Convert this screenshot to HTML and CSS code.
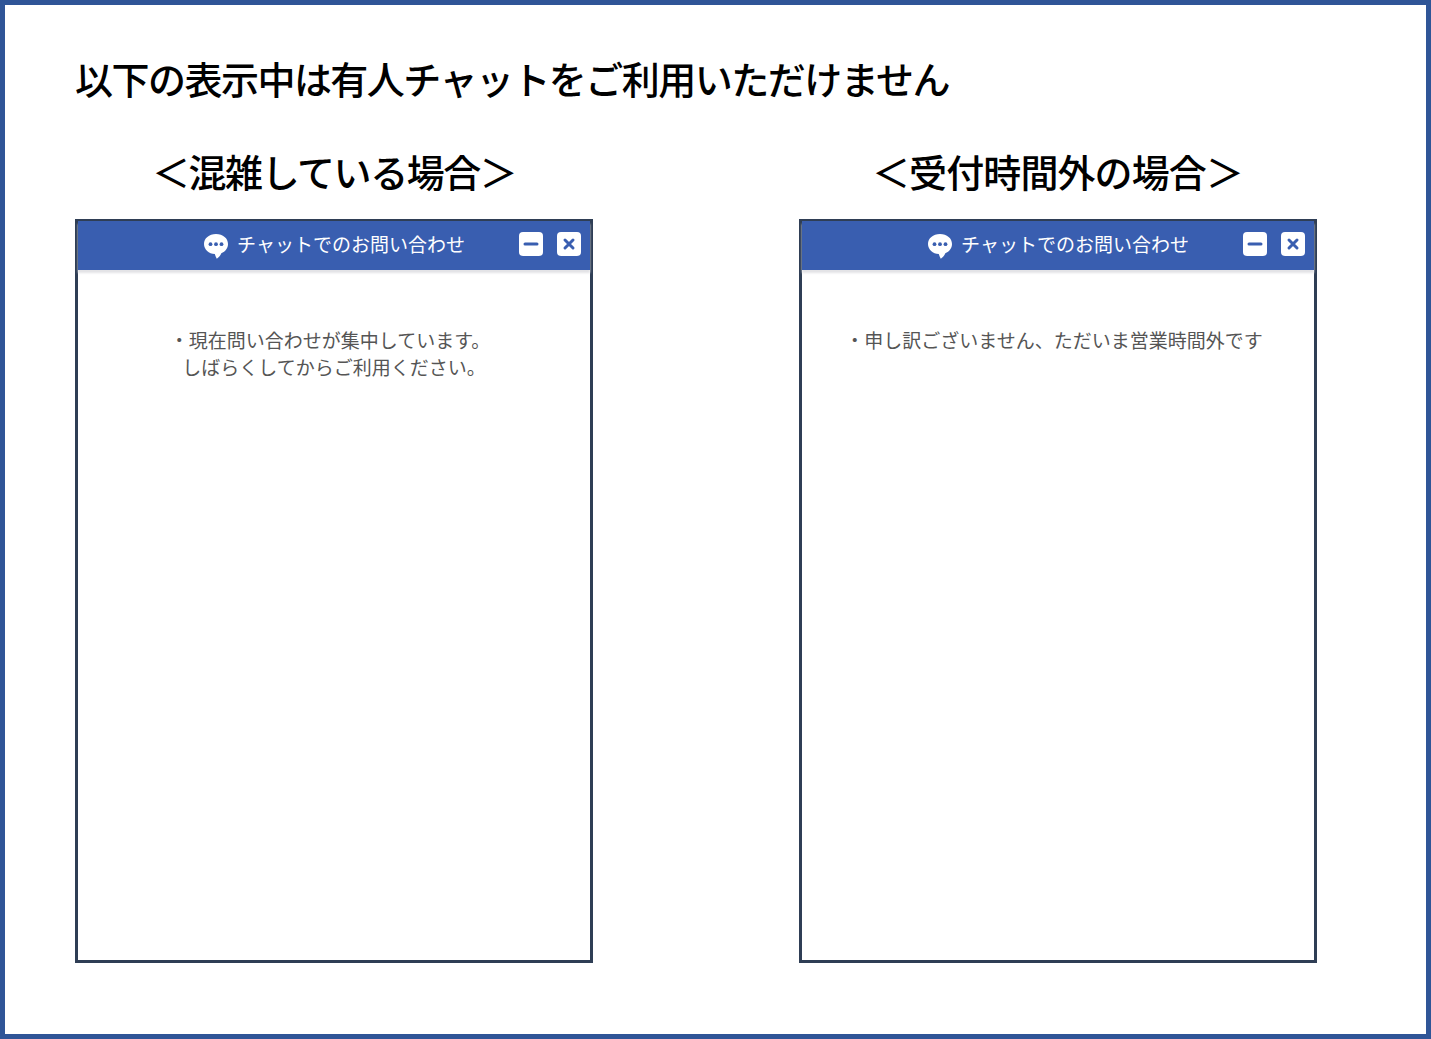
FILE: index.html
```html
<!DOCTYPE html>
<html lang="ja">
<head>
<meta charset="utf-8">
<title>チャットのご案内</title>
<link rel="stylesheet" href="styles.css">
</head>
<body>
<main class="frame">
  <h1 class="title">以下の表示中は有人チャットをご利用いただけません</h1>
  <div class="columns">
    <section class="case">
      <h2 class="case-title case-title-busy">＜混雑している場合＞</h2>
      <div class="panel">
        <header class="panel-head">
          <div class="head-label">
            <svg class="bubble" viewBox="0 0 26 27" aria-hidden="true"><path d="M13 1C6 1 1 5.400 1 11c0 5.500 4.800 9.800 10.800 10 .5 1.700 1.200 3.400 2 4.800 1.900-1.300 3.500-3 4.500-5.600C22.400 18.600 25 15.200 25 11 25 5.400 20 1 13 1z" fill="#fff"/><circle cx="7.500" cy="11.200" r="1.900" fill="#395eb0"/><circle cx="13" cy="11.200" r="1.900" fill="#395eb0"/><circle cx="18.500" cy="11.200" r="1.900" fill="#395eb0"/></svg>
            <span>チャットでのお問い合わせ</span>
          </div>
          <div class="head-buttons">
            <span class="head-btn"><svg viewBox="0 0 24 24" aria-hidden="true"><path d="M6 12h12" class="btn-stroke"/></svg></span>
            <span class="head-btn"><svg viewBox="0 0 24 24" aria-hidden="true"><path d="M8 8l8 8M16 8l-8 8" class="btn-stroke"/></svg></span>
          </div>
        </header>
        <p class="message"><span class="lead">・現在問い合わせが集中しています。</span><br>しばらくしてからご利用ください。</p>
      </div>
    </section>
    <section class="case">
      <h2 class="case-title case-title-closed">＜受付時間外の場合＞</h2>
      <div class="panel">
        <header class="panel-head">
          <div class="head-label">
            <svg class="bubble" viewBox="0 0 26 27" aria-hidden="true"><path d="M13 1C6 1 1 5.400 1 11c0 5.500 4.800 9.800 10.800 10 .5 1.700 1.200 3.400 2 4.800 1.900-1.300 3.500-3 4.500-5.600C22.400 18.600 25 15.200 25 11 25 5.400 20 1 13 1z" fill="#fff"/><circle cx="7.500" cy="11.200" r="1.900" fill="#395eb0"/><circle cx="13" cy="11.200" r="1.900" fill="#395eb0"/><circle cx="18.500" cy="11.200" r="1.900" fill="#395eb0"/></svg>
            <span>チャットでのお問い合わせ</span>
          </div>
          <div class="head-buttons">
            <span class="head-btn"><svg viewBox="0 0 24 24" aria-hidden="true"><path d="M6 12h12" class="btn-stroke"/></svg></span>
            <span class="head-btn"><svg viewBox="0 0 24 24" aria-hidden="true"><path d="M8 8l8 8M16 8l-8 8" class="btn-stroke"/></svg></span>
          </div>
        </header>
        <p class="message"><span class="lead">・申し訳ございません、ただいま営業時間外です</span></p>
      </div>
    </section>
  </div>
</main>
</body>
</html>
```

FILE: styles.css
```css
* { box-sizing: border-box; }
html, body { margin: 0; padding: 0; background: #fff; }
body { font-family: "Noto Sans CJK JP", "Noto Sans", sans-serif; }
.frame {
  width: 1431px;
  height: 1039px;
  border: 5px solid #2f5597;
  padding: 46px 0 0 70px;
  background: #fff;
  overflow: hidden;
}
.title {
  margin: 0;
  font-size: 38px;
  letter-spacing: -1.52px;
  line-height: 54px;
  font-weight: 500;
  color: #000;
  white-space: nowrap;
}
.columns {
  display: flex;
  gap: 206px;
  margin-top: 39px;
}
.case { width: 518px; }
.case-title {
  margin: 0 0 21px;
  font-size: 38px;
  line-height: 54px;
  font-weight: 500;
  color: #000;
  white-space: nowrap;
}
.case-title-busy { padding-left: 77px; letter-spacing: -1.45px; }
.case-title-closed { padding-left: 73px; letter-spacing: -0.9px; }
.panel {
  height: 744px;
  border: 3px solid #2f3e55;
  border-top-width: 2px;
  background: #fff;
}
.panel-head {
  height: 49px;
  background: #395eb0;
  box-shadow: 0 3px 2px #e3e3e6;
  display: flex;
  align-items: center;
  position: relative;
  justify-content: center;
}
.head-label {
  display: flex;
  align-items: center;
  gap: 8px;
  color: #fff;
  font-size: 19px;
  line-height: 28px;
}
.head-label span { margin-top: -3px; }
.bubble { width: 26px; height: 27px; margin-top: 1px; flex: none; }
.head-buttons {
  position: absolute;
  top: 11px;
  right: 9px;
  display: flex;
  gap: 14px;
}
.head-btn {
  width: 24px;
  height: 24px;
  border-radius: 4px;
  background: #fff;
  display: block;
}
.head-btn svg { display: block; width: 24px; height: 24px; }
.btn-stroke { fill: none; stroke: #395eb0; stroke-width: 3; stroke-linecap: round; }
.message {
  margin: 56px 0 0;
  text-align: center;
  color: #555;
  font-size: 19px;
  line-height: 27px;
}
.lead { margin-right: 8px; }
```
